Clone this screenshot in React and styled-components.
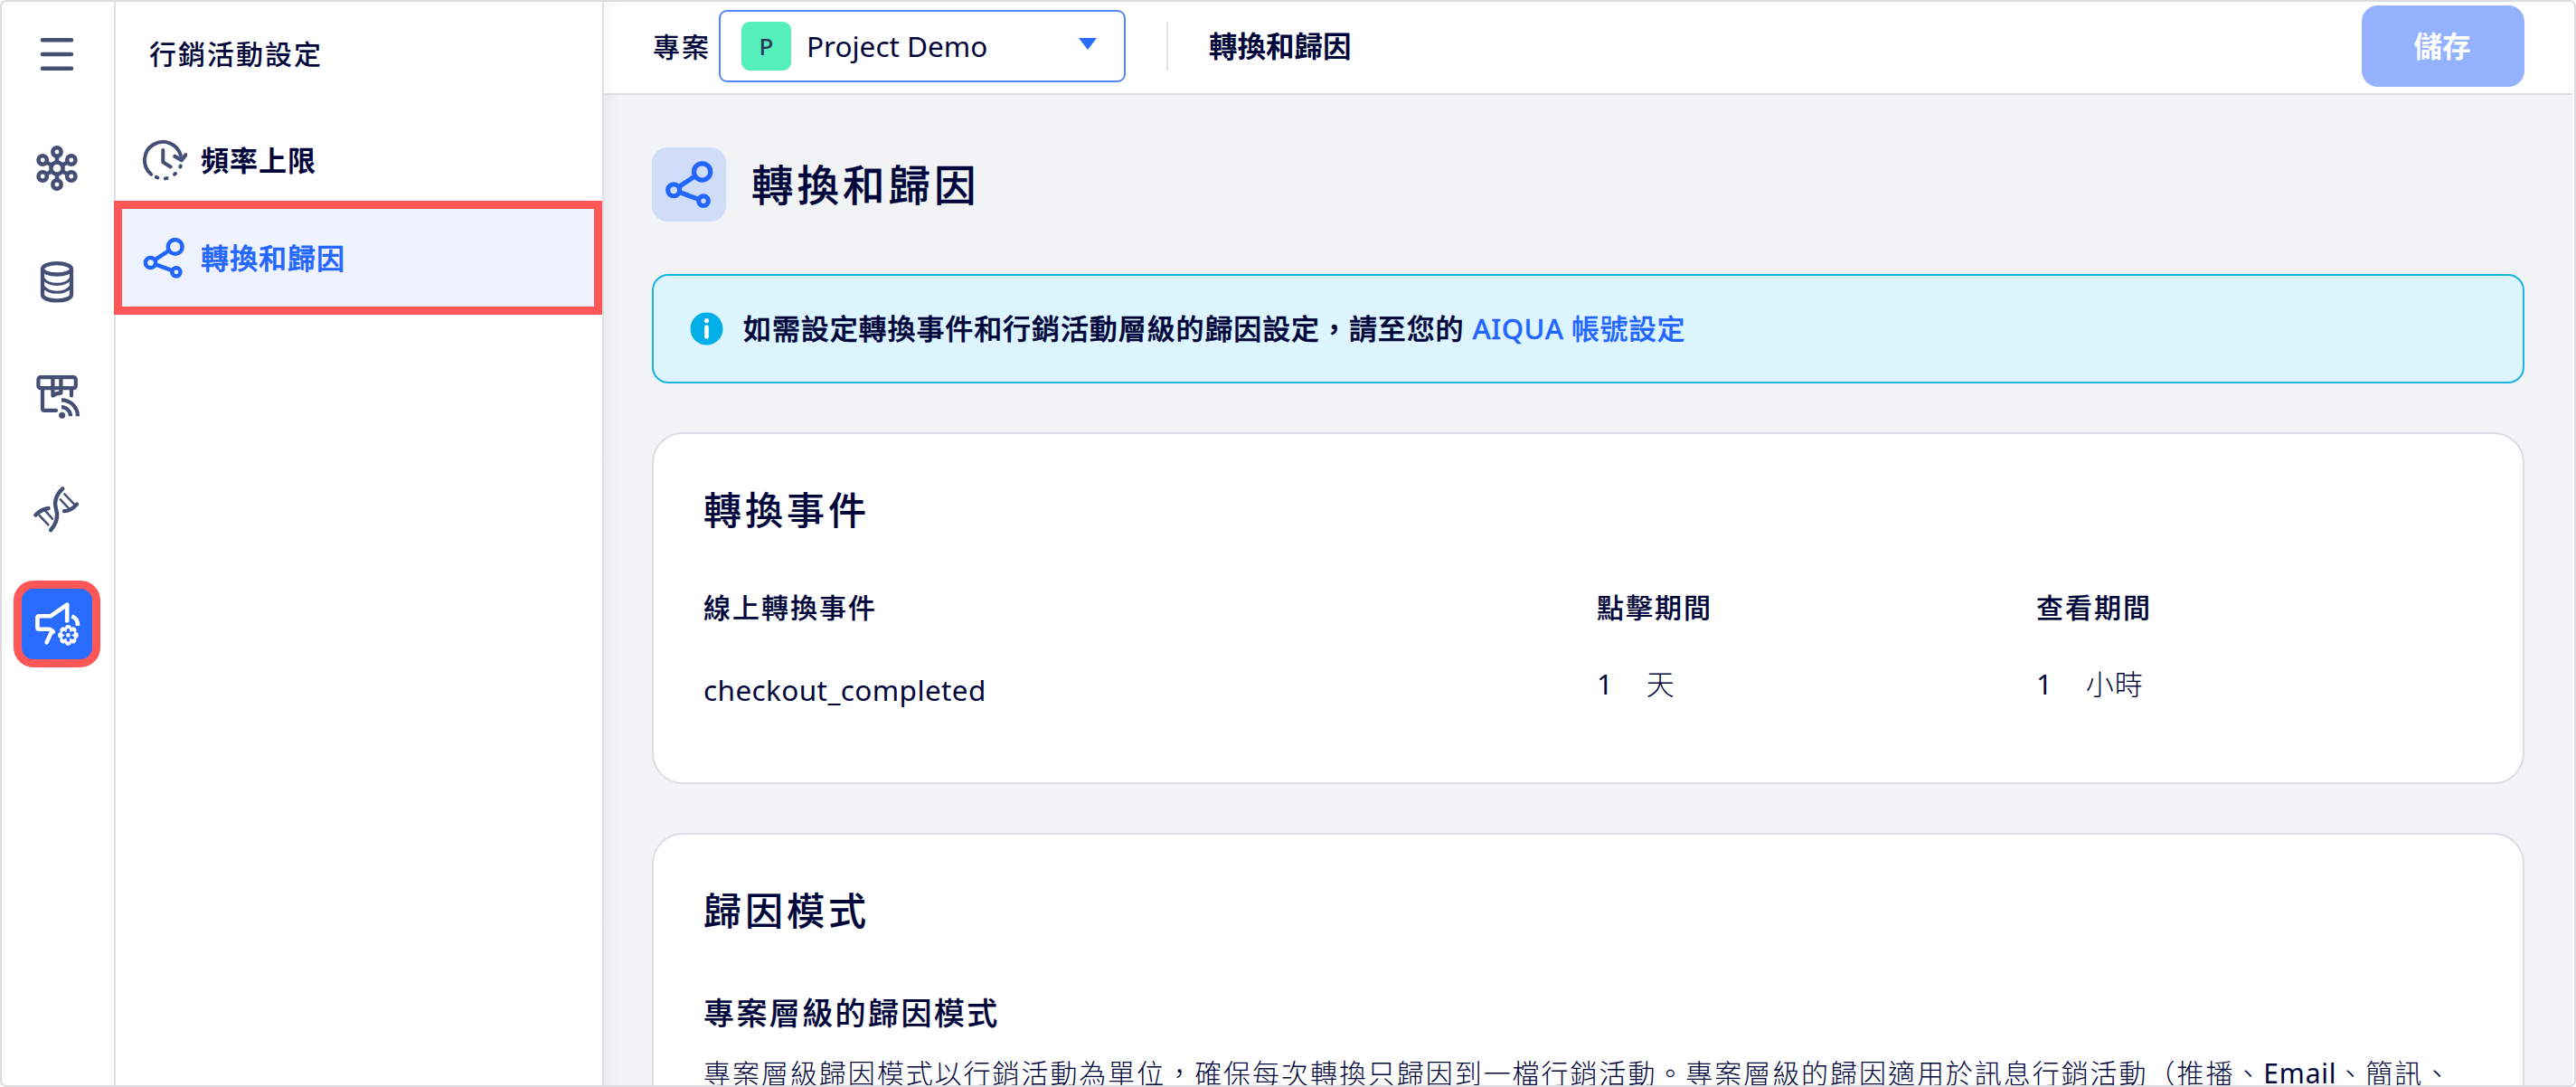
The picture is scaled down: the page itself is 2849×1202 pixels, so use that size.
import React from "react";
import styled, { createGlobalStyle, css } from "styled-components";

const GlobalStyle = createGlobalStyle`
  * {
    box-sizing: border-box;
  }
  body {
    margin: 0;
    background: #fff;
    color: #00053a;
    font-family: "Noto Sans", "Noto Sans CJK TC", sans-serif;
    font-size: 30px;
  }
`;

const Frame = styled.div`
  display: flex;
  width: 2849px;
  height: 1202px;
  padding-right: 2px;
  border: 2px solid #dcdcde;
  border-radius: 7px;
  overflow: hidden;
`;

const Rail = styled.nav`
  display: flex;
  flex-direction: column;
  align-items: center;
  flex: none;
  width: 126px;
  padding: 10px 0 0;
  border-right: 2px solid #dfdfe6;
`;

const RailItem = styled.div`
  display: flex;
  align-items: center;
  justify-content: center;
  width: 96px;
  height: 96px;
  margin-bottom: 30px;
  margin-right: 2px;
  color: #454e74;
  ${(props) =>
    props.$active &&
    css`
      border: 9px solid #ff5757;
      border-radius: 22px;
      background: #296bff;
      color: #fff;
    `}
`;

const Panel = styled.aside`
  flex: none;
  width: 540px;
  border-right: 2px solid #dfdfe6;
`;

const PanelTitle = styled.div`
  height: 40px;
  margin: 38px 0 43px 37px;
  line-height: 40px;
  font-weight: 500;
  letter-spacing: 2px;
`;

const MenuItem = styled.div`
  display: flex;
  align-items: center;
  height: 108px;
  margin: 0 9px 0 7px;
  padding-left: 21px;
  font-size: 31px;
  font-weight: 700;
  letter-spacing: 1px;
  ${(props) =>
    props.$active &&
    css`
      position: relative;
      background: #eff3ff;
      outline: 9px solid #ff5757;
      color: #2366ff;
      font-weight: 500;
      -webkit-text-stroke: 0.6px currentColor;
    `}

  svg {
    margin-right: 15px;
    color: ${(props) => (props.$active ? "#2366ff" : "#454e74")};
  }
`;

const MenuLabel = styled.span`
  padding-bottom: 4px;
`;

const Main = styled.main`
  flex: 1;
  min-width: 0;
  background: linear-gradient(to right, #ebecf0, #f1f3f5 20px);
`;

const TopBar = styled.header`
  display: flex;
  align-items: center;
  height: 103px;
  padding: 0 53px 4px 54px;
  border-bottom: 2px solid #dddee4;
  background: linear-gradient(to right, #fafafc, #fff 20px);
`;

const ProjectLabel = styled.span`
  width: 73px;
  padding-bottom: 2px;
  letter-spacing: 2px;
  font-weight: 500;
`;

const ProjectSelect = styled.div`
  display: flex;
  align-items: center;
  width: 450px;
  height: 80px;
  padding: 0 30px 0 23px;
  border: 2px solid #5384fb;
  border-radius: 9px;
  font-size: 31.5px;
`;

const ProjectTile = styled.span`
  width: 55px;
  height: 54px;
  margin-right: 17px;
  border-radius: 9px;
  background: #54efba;
  color: #28375a;
  font-size: 26px;
  font-weight: 500;
  line-height: 54px;
  text-align: center;
`;

const Caret = styled.span`
  margin: -4px 0 0 auto;
  border: 10.5px solid transparent;
  border-top: 13px solid #296bff;
  border-bottom: 0;
`;

const Divider = styled.span`
  width: 2px;
  height: 54px;
  margin: 0 45px;
  background: #e2e3e8;
`;

const Crumb = styled.span`
  padding-bottom: 4px;
  font-size: 31.5px;
  font-weight: 700;
`;

const SaveButton = styled.button`
  width: 180px;
  height: 90px;
  margin-left: auto;
  padding: 0 2px 4px 0;
  border: 0;
  border-radius: 18px;
  background: #94b2ff;
  color: #fff;
  font: inherit;
  font-size: 31.5px;
  font-weight: 700;
`;

const Content = styled.div`
  padding: 58px 53px 0;
`;

const PageHeading = styled.div`
  display: flex;
  align-items: center;
  height: 82px;
  margin-bottom: 58px;
`;

const HeadingIcon = styled.span`
  display: flex;
  align-items: center;
  justify-content: center;
  width: 82px;
  height: 82px;
  margin-right: 28px;
  border-radius: 17px;
  background: #d0ddf8;
  color: #2366ff;
`;

const PageTitle = styled.h1`
  margin: 0;
  padding-bottom: 5px;
  font-size: 46.5px;
  font-weight: 500;
  letter-spacing: 4px;
  -webkit-text-stroke: 0.3px currentColor;
`;

const Notice = styled.div`
  display: flex;
  align-items: center;
  height: 121px;
  margin-bottom: 54px;
  padding-left: 40px;
  border: 2px solid #18b4e2;
  border-radius: 18px;
  background: #dcf5ff;
  font-size: 31px;
  font-weight: 500;
  letter-spacing: 0.9px;

  svg {
    margin-right: 22px;
  }
`;

const NoticeText = styled.span`
  padding-bottom: 4px;
  -webkit-text-stroke: 0.5px currentColor;
`;

const NoticeLink = styled.a`
  margin-left: 9px;
  color: #2366ff;
  letter-spacing: 0.5px;
  -webkit-text-stroke: 0.3px currentColor;
`;

const Card = styled.section`
  height: 389px;
  margin-bottom: 54px;
  padding: 52px 55px 0;
  border: 2px solid #dcdde4;
  border-radius: 34px;
  background: #fff;
`;

const CardTitle = styled.h2`
  margin: 0;
  font-size: 42px;
  font-weight: 500;
  line-height: 64px;
  letter-spacing: 4px;
  -webkit-text-stroke: 0.2px currentColor;
`;

const EventTable = styled.div`
  display: grid;
  grid-template-columns: 988px 486px 1fr;
  margin-top: 54px;
`;

const ColumnHead = styled.div`
  height: 84px;
  line-height: 44px;
  font-weight: 500;
  letter-spacing: 2px;
  -webkit-text-stroke: 0.2px currentColor;
`;

const EventName = styled.div`
  padding-top: 7px;
  font-size: 31.5px;
  line-height: 44px;
  letter-spacing: 0.4px;
`;

const Period = styled.div`
  display: flex;
  gap: 37px;
  font-size: 31px;
  line-height: 44px;
`;

const Unit = styled.span`
  font-weight: 300;
  letter-spacing: 1px;
`;

const SubTitle = styled.h3`
  margin: 57px 0 0;
  font-size: 34px;
  font-weight: 500;
  line-height: 48px;
  letter-spacing: 2.4px;
  -webkit-text-stroke: 0.2px currentColor;
`;

const Paragraph = styled.p`
  margin: 19px 0 0;
  font-weight: 300;
  line-height: 48px;
  letter-spacing: 1.95px;
  white-space: nowrap;
`;

const Latin = styled.span`
  font-weight: 400;
  letter-spacing: 0.8px;
`;

const Svg = ({ w, h, box, sw = 4, children }) => (
  <svg
    width={w}
    height={h}
    viewBox={box}
    fill="none"
    stroke="currentColor"
    strokeWidth={sw}
    strokeLinecap="round"
    strokeLinejoin="round"
  >
    {children}
  </svg>
);

const MenuIcon = () => (
  <Svg w={54} h={54} box="36 33 54 54" sw={4.6}>
    <path d="M47 44.3H79M47 60H79M47 75.7H79" />
  </Svg>
);

const HubIcon = () => (
  <Svg w={54} h={54} box="36 159 54 54" sw={4.5}>
    <circle cx="63" cy="186" r="6.6" />
    <circle cx="63" cy="168" r="4.7" />
    <circle cx="63" cy="204" r="4.7" />
    <circle cx="47.2" cy="177" r="4.7" />
    <circle cx="78.8" cy="177" r="4.7" />
    <circle cx="47.2" cy="195" r="4.7" />
    <circle cx="78.8" cy="195" r="4.7" />
    <path d="M63 173V179M63 193V199M51.6 179.6L56.8 182.5M69.2 189.5L74.4 192.4M51.6 192.4L56.8 189.5M69.2 182.5L74.4 179.6" />
  </Svg>
);

const DatabaseIcon = () => (
  <Svg w={54} h={54} box="36 285 54 54" sw={4.3}>
    <ellipse cx="63" cy="297.3" rx="16" ry="6.2" />
    <path d="M47 298V326C47 329.8 54 332.4 63 332.4S79 329.8 79 326V298" />
    <path d="M48 308C51 312.4 57 314.4 63 314.4S75 312.4 78 308M48 317C51 321.2 57 323.2 63 323.2S75 321.2 78 317" strokeWidth="3.1" />
  </Svg>
);

const StoreIcon = () => (
  <Svg w={54} h={54} box="36 411 54 54" sw={4.2}>
    <rect x="42.4" y="417.2" width="41.4" height="12" rx="2.5" />
    <path d="M47 431V451.5Q47 453.9 49.4 453.9H62M79 431V437.5" />
    <path d="M58.4 418V437.6Q62 434.6 67.4 434.6V418" strokeLinecap="butt" />
    <path d="M68 450.2A10 10 0 0 1 78 460.2M68 442.3A18 18 0 0 1 86 460.2" strokeLinecap="butt" />
    <circle cx="68.6" cy="459.2" r="3.5" fill="currentColor" stroke="none" />
  </Svg>
);

const DnaIcon = () => (
  <Svg w={54} h={54} box="36 537 54 54" sw={4.3}>
    <path d="M69.3 540.4C61 548 60 556 62 563C65 572 62.5 579 56 586.2" />
    <path d="M39.3 569.6Q46 563 53.6 562M71 565.2Q78 565.4 85 557.6" />
    <path d="M71.4 546.4L82.5 558M66.8 552.4L76.5 562.6M43.5 569.8L53.4 580.4M50 564.6L58 573.8" strokeWidth="2.5" />
  </Svg>
);

const GEAR_LOBES = [0, 45, 90, 135, 180, 225, 270, 315];
const GEAR_SLOTS = [0, 60, 120, 180, 240, 300];

const CampaignIcon = () => (
  <Svg w={54} h={54} box="36 663 54 54" sw={4.6}>
    <path d="M74.2 686.5V668.6L56.2 681.2H43.4Q41.4 681.2 41.4 683.2V693.8Q41.4 695.8 43.4 695.8H54Q56.4 695.8 58.8 698.8M57.2 698.4L51.6 710.4" />
    <path d="M79.4 681.4Q86.2 683.8 86 692" strokeLinecap="butt" />
    <g transform="translate(75.4 702.4)">
      <circle r="9" fill="currentColor" stroke="none" />
      {GEAR_LOBES.map((angle) => (
        <circle
          key={angle}
          cy="-7.9"
          r="3.4"
          fill="currentColor"
          stroke="none"
          transform={`rotate(${angle})`}
        />
      ))}
      {GEAR_SLOTS.map((angle) => (
        <path
          key={angle}
          d="M0 0V-5.6"
          stroke="#296bff"
          strokeWidth="3.6"
          transform={`rotate(${angle})`}
        />
      ))}
      <circle r="2.3" fill="currentColor" stroke="none" />
    </g>
  </Svg>
);

const FrequencyIcon = () => (
  <Svg w={51} h={51} box="156 151.5 51 51">
    <path d="M167.2 192.2A20.3 20.3 0 1 1 199.9 171.6" />
    <path d="M199.7 183L199.3 184.2M194 191.4L193 192.2M184.6 196.6L182.8 196.9M174.4 196L172.8 195.4" />
    <path d="M193.4 172.4L200.8 176.7L205.6 170.6" strokeWidth="4.2" />
    <path d="M180.3 165.6V178.8L188.6 184" />
  </Svg>
);

const ShareIcon = ({ size }) => (
  <Svg w={size} h={size} box="156.3 259.8 51 51" sw={4.5}>
    <circle cx="194" cy="272.7" r="7.9" />
    <circle cx="166.8" cy="290.3" r="5.6" />
    <circle cx="195.2" cy="300.6" r="4.6" />
    <path d="M171.8 287L187.2 276.9M172.2 292.2L190.6 299" />
  </Svg>
);

const InfoIcon = () => (
  <svg width="37" height="37" viewBox="0 0 37 37">
    <circle cx="18.5" cy="18.5" r="18" fill="#00aee8" />
    <circle cx="18.5" cy="9.6" r="2.6" fill="#fff" />
    <rect x="16.2" y="14.6" width="4.6" height="15" rx="2.2" fill="#fff" />
  </svg>
);

export default function App() {
  return (
    <>
      <GlobalStyle />
      <Frame>
        <Rail>
          <RailItem><MenuIcon /></RailItem>
          <RailItem><HubIcon /></RailItem>
          <RailItem><DatabaseIcon /></RailItem>
          <RailItem><StoreIcon /></RailItem>
          <RailItem><DnaIcon /></RailItem>
          <RailItem $active><CampaignIcon /></RailItem>
        </Rail>
        <Panel>
          <PanelTitle>行銷活動設定</PanelTitle>
          <MenuItem>
            <FrequencyIcon />
            <MenuLabel>頻率上限</MenuLabel>
          </MenuItem>
          <MenuItem $active>
            <ShareIcon size={51} />
            <MenuLabel>轉換和歸因</MenuLabel>
          </MenuItem>
        </Panel>
        <Main>
          <TopBar>
            <ProjectLabel>專案</ProjectLabel>
            <ProjectSelect>
              <ProjectTile>P</ProjectTile>
              Project Demo
              <Caret />
            </ProjectSelect>
            <Divider />
            <Crumb>轉換和歸因</Crumb>
            <SaveButton>儲存</SaveButton>
          </TopBar>
          <Content>
            <PageHeading>
              <HeadingIcon>
                <ShareIcon size={59} />
              </HeadingIcon>
              <PageTitle>轉換和歸因</PageTitle>
            </PageHeading>
            <Notice>
              <InfoIcon />
              <NoticeText>
                如需設定轉換事件和行銷活動層級的歸因設定，請至您的
                <NoticeLink>AIQUA 帳號設定</NoticeLink>
              </NoticeText>
            </Notice>
            <Card>
              <CardTitle>轉換事件</CardTitle>
              <EventTable>
                <ColumnHead>線上轉換事件</ColumnHead>
                <ColumnHead>點擊期間</ColumnHead>
                <ColumnHead>查看期間</ColumnHead>
                <EventName>checkout_completed</EventName>
                <Period>
                  1<Unit>天</Unit>
                </Period>
                <Period>
                  1<Unit>小時</Unit>
                </Period>
              </EventTable>
            </Card>
            <Card>
              <CardTitle>歸因模式</CardTitle>
              <SubTitle>專案層級的歸因模式</SubTitle>
              <Paragraph>
                專案層級歸因模式以行銷活動為單位，確保每次轉換只歸因到一檔行銷活動。專案層級的歸因適用於訊息行銷活動（推播、<Latin>Email</Latin>、簡訊、
              </Paragraph>
            </Card>
          </Content>
        </Main>
      </Frame>
    </>
  );
}
